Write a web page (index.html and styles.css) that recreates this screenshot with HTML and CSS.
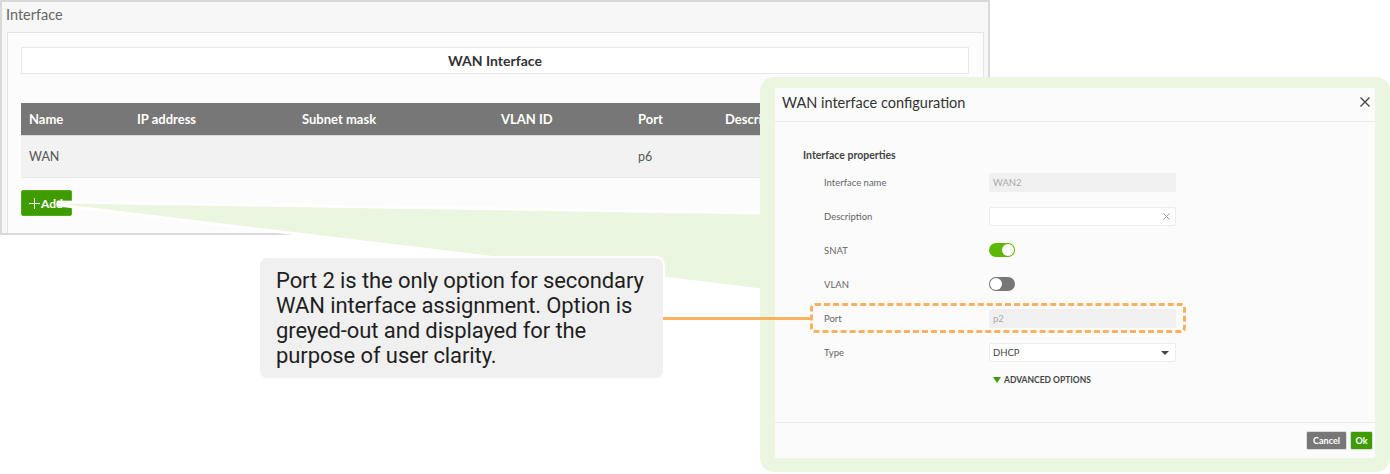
FILE: index.html
```html
<!DOCTYPE html>
<html lang="en">
<head>
    <meta charset="UTF-8">
    <title>WAN Interface</title>
    <link rel="stylesheet" href="styles.css">
</head>
<body>
    <div class="canvas">
        <!-- Interface page -->
        <section class="app-panel">
            <h1 class="app-title">Interface</h1>
            <div class="app-card">
                <div class="section-head">WAN Interface</div>
                <div class="table">
                    <div class="table-row table-head">
                        <span>Name</span><span>IP address</span><span>Subnet mask</span><span>VLAN ID</span><span>Port</span><span>Description</span>
                    </div>
                    <div class="table-row">
                        <span>WAN</span><span></span><span></span><span></span><span>p6</span><span></span>
                    </div>
                </div>
                <button class="btn-add">
                    <svg width="11" height="11" viewBox="0 0 11 11"><path d="M5.5 0v11M0 5.5h11" stroke="#fff" stroke-width="1"/></svg>Add
                </button>
            </div>
        </section>

        <!-- Zoom wedge from Add button -->
        <svg class="wedge" width="1390" height="474" viewBox="0 0 1390 474">
            <polygon points="58,202 762,213 762,290 58,205" fill="#eaf6df" stroke="#fff" stroke-width="3" stroke-linejoin="round"/>
        </svg>

        <!-- Callout -->
        <div class="callout">
            <p>Port 2 is the only option for secondary<br>WAN interface assignment. Option is<br>greyed-out and displayed for the<br>purpose of user clarity.</p>
        </div>

        <!-- Dialog -->
        <div class="dialog-frame">
            <div class="dialog">
                <div class="dialog-header">
                    <span>WAN interface configuration</span>
                    <svg class="close" width="10" height="10" viewBox="0 0 10 10"><path d="M0.5 0.5l9 9M9.5 0.5l-9 9" stroke="#444" stroke-width="1.3"/></svg>
                </div>
                <div class="dialog-body">
                    <div class="group-title">Interface properties</div>
                    <div class="form-row">
                        <label>Interface name</label>
                        <div class="field disabled">WAN2</div>
                    </div>
                    <div class="form-row">
                        <label>Description</label>
                        <div class="field">
                            <svg class="clear" width="7" height="7" viewBox="0 0 7 7"><path d="M0.5 0.5l6 6M6.5 0.5l-6 6" stroke="#999" stroke-width="1"/></svg>
                        </div>
                    </div>
                    <div class="form-row">
                        <label>SNAT</label>
                        <div class="toggle on"><i></i></div>
                    </div>
                    <div class="form-row">
                        <label>VLAN</label>
                        <div class="toggle"><i></i></div>
                    </div>
                    <div class="form-row highlight">
                        <label>Port</label>
                        <div class="field disabled">p2</div>
                    </div>
                    <div class="form-row">
                        <label>Type</label>
                        <div class="field select">DHCP<span class="caret"></span></div>
                    </div>
                    <div class="advanced"><span class="arrow"></span>ADVANCED OPTIONS</div>
                </div>
                <div class="dialog-footer">
                    <button class="btn btn-cancel">Cancel</button>
                    <button class="btn btn-ok">Ok</button>
                </div>
            </div>
        </div>

        <!-- Connector to highlighted row -->
        <div class="connector"></div>
    </div>
</body>
</html>
```

FILE: styles.css
```css
* {
    box-sizing: border-box;
}
body {
    margin: 0;
    background-color: #fff;
    font-family: Lato, "Open Sans", sans-serif;
}
.canvas {
    position: relative;
    width: 1390px;
    height: 474px;
    overflow: hidden;
}

/* Interface page */
.app-panel {
    width: 990px;
    height: 235px;
    border: 2px solid #d9d9d9;
    background-color: #f6f7f6;
    padding: 0 4px 0 5px;
    overflow: hidden;
}
.app-title {
    margin: 0 0 4px -1px;
    font-size: 14.5px;
    font-weight: normal;
    line-height: 26px;
    color: #666;
}
.app-card {
    height: 220px;
    border: 1px solid #e4e4e4;
    background-color: #fcfcfc;
    padding: 14px 14px 0 13px;
}
.section-head {
    height: 27px;
    border: 1px solid #e8e8e8;
    background-color: #fff;
    display: flex;
    justify-content: center;
    align-items: center;
    font-size: 14px;
    font-weight: bold;
    color: #333;
}
.table {
    margin-top: 29px;
}
.table-row {
    display: grid;
    grid-template-columns: 108px 165px 199px 137px 87px 1fr;
    height: 42px;
    align-items: center;
    background-color: #f2f2f2;
    border-bottom: 1px solid #e8e8e8;
    font-size: 12.5px;
    color: #555;
}
.table-row span {
    padding-left: 8px;
}
.table-head {
    height: 33px;
    background-color: #777;
    border-bottom: 1px solid #ddd;
    color: #fff;
    font-size: 13px;
    font-weight: bold;
}
.btn-add {
    margin-top: 12px;
    width: 51px;
    height: 26px;
    border: 1px solid #52ab1c;
    border-radius: 2px;
    background-color: #3f9c00;
    color: #fff;
    font-family: inherit;
    font-size: 12px;
    font-weight: bold;
    display: flex;
    align-items: center;
    gap: 1px;
    padding: 0 0 0 7px;
}

/* Overlays */
.wedge {
    position: absolute;
    top: 0;
    left: 0;
}
.callout {
    position: absolute;
    left: 258px;
    top: 256px;
    width: 407px;
    height: 124px;
    background-color: #f0f0f0;
    border: 2px solid #fff;
    border-radius: 9px;
    padding: 10px 0 0 16px;
}
.callout p {
    margin: 0;
    font-family: Roboto, "Liberation Sans", sans-serif;
    font-size: 22px;
    line-height: 25px;
    letter-spacing: -0.1px;
    color: #1f1f1f;
    white-space: nowrap;
}
.connector {
    position: absolute;
    left: 663px;
    top: 317px;
    width: 150px;
    height: 3px;
    background-color: #f9b25f;
}

/* Dialog */
.dialog-frame {
    position: absolute;
    left: 760px;
    top: 77px;
    width: 630px;
    height: 395px;
    background-color: #eaf6df;
    border-radius: 14px;
    padding: 11px 15px 14px 15px;
}
.dialog {
    width: 600px;
    height: 370px;
    background-color: #fbfbfb;
    display: flex;
    flex-direction: column;
}
.dialog-header {
    height: 34px;
    border-bottom: 1px solid #ececec;
    display: flex;
    align-items: center;
    justify-content: space-between;
    padding: 0 5px 5px 7px;
    font-size: 14.5px;
    color: #333;
}
.dialog-body {
    flex: 1;
    padding: 24px 0 0 28px;
}
.group-title {
    height: 19px;
    line-height: 19px;
    font-size: 10.5px;
    font-weight: bold;
    color: #444;
}
.form-row {
    position: relative;
    display: grid;
    grid-template-columns: 165px 187px;
    width: 352px;
    height: 34px;
    align-items: center;
    margin-left: 21px;
}
.form-row label {
    font-size: 9.5px;
    color: #666;
}
.form-row.highlight::after {
    content: "";
    position: absolute;
    top: 2px;
    bottom: 2px;
    left: -14px;
    right: -10px;
    border: 3px dashed #f8b160;
    border-radius: 5px;
}
.field {
    position: relative;
    height: 19px;
    border: 1px solid #ececec;
    border-radius: 2px;
    background-color: #fff;
    display: flex;
    align-items: center;
    padding-left: 3px;
    font-size: 9.5px;
    color: #444;
}
.field.disabled {
    background-color: #f0f0f0;
    border-color: #f0f0f0;
    color: #aaa;
}
.clear {
    position: absolute;
    right: 5px;
}
.caret {
    position: absolute;
    right: 6px;
    top: 7px;
    border-left: 4px solid transparent;
    border-right: 4px solid transparent;
    border-top: 4px solid #444;
}
.toggle {
    position: relative;
    width: 26px;
    height: 14px;
    border-radius: 7px;
    background-color: #777;
}
.toggle i {
    position: absolute;
    top: 1px;
    left: 1px;
    width: 12px;
    height: 12px;
    border-radius: 50%;
    background-color: #fff;
}
.toggle.on {
    background-color: #5cb800;
}
.toggle.on i {
    left: 13px;
}
.advanced {
    margin: 3px 0 0 186px;
    height: 16px;
    display: flex;
    align-items: center;
    gap: 3px;
    font-size: 8.5px;
    font-weight: bold;
    color: #444;
}
.arrow {
    width: 0;
    height: 0;
    border-left: 4px solid transparent;
    border-right: 4px solid transparent;
    border-top: 6px solid #3f9c00;
    margin-left: 4px;
}
.dialog-footer {
    height: 36px;
    border-top: 1px solid #ececec;
    display: flex;
    justify-content: flex-end;
    align-items: center;
    gap: 3px;
    padding-right: 2px;
}
.btn {
    height: 19px;
    border: 1px solid #ddd;
    border-radius: 2px;
    color: #fff;
    font-family: inherit;
    font-size: 9px;
    font-weight: bold;
    padding: 0;
}
.btn-cancel {
    width: 41px;
    background-color: #777;
}
.btn-ok {
    width: 23px;
    background-color: #3f9c00;
}
```
